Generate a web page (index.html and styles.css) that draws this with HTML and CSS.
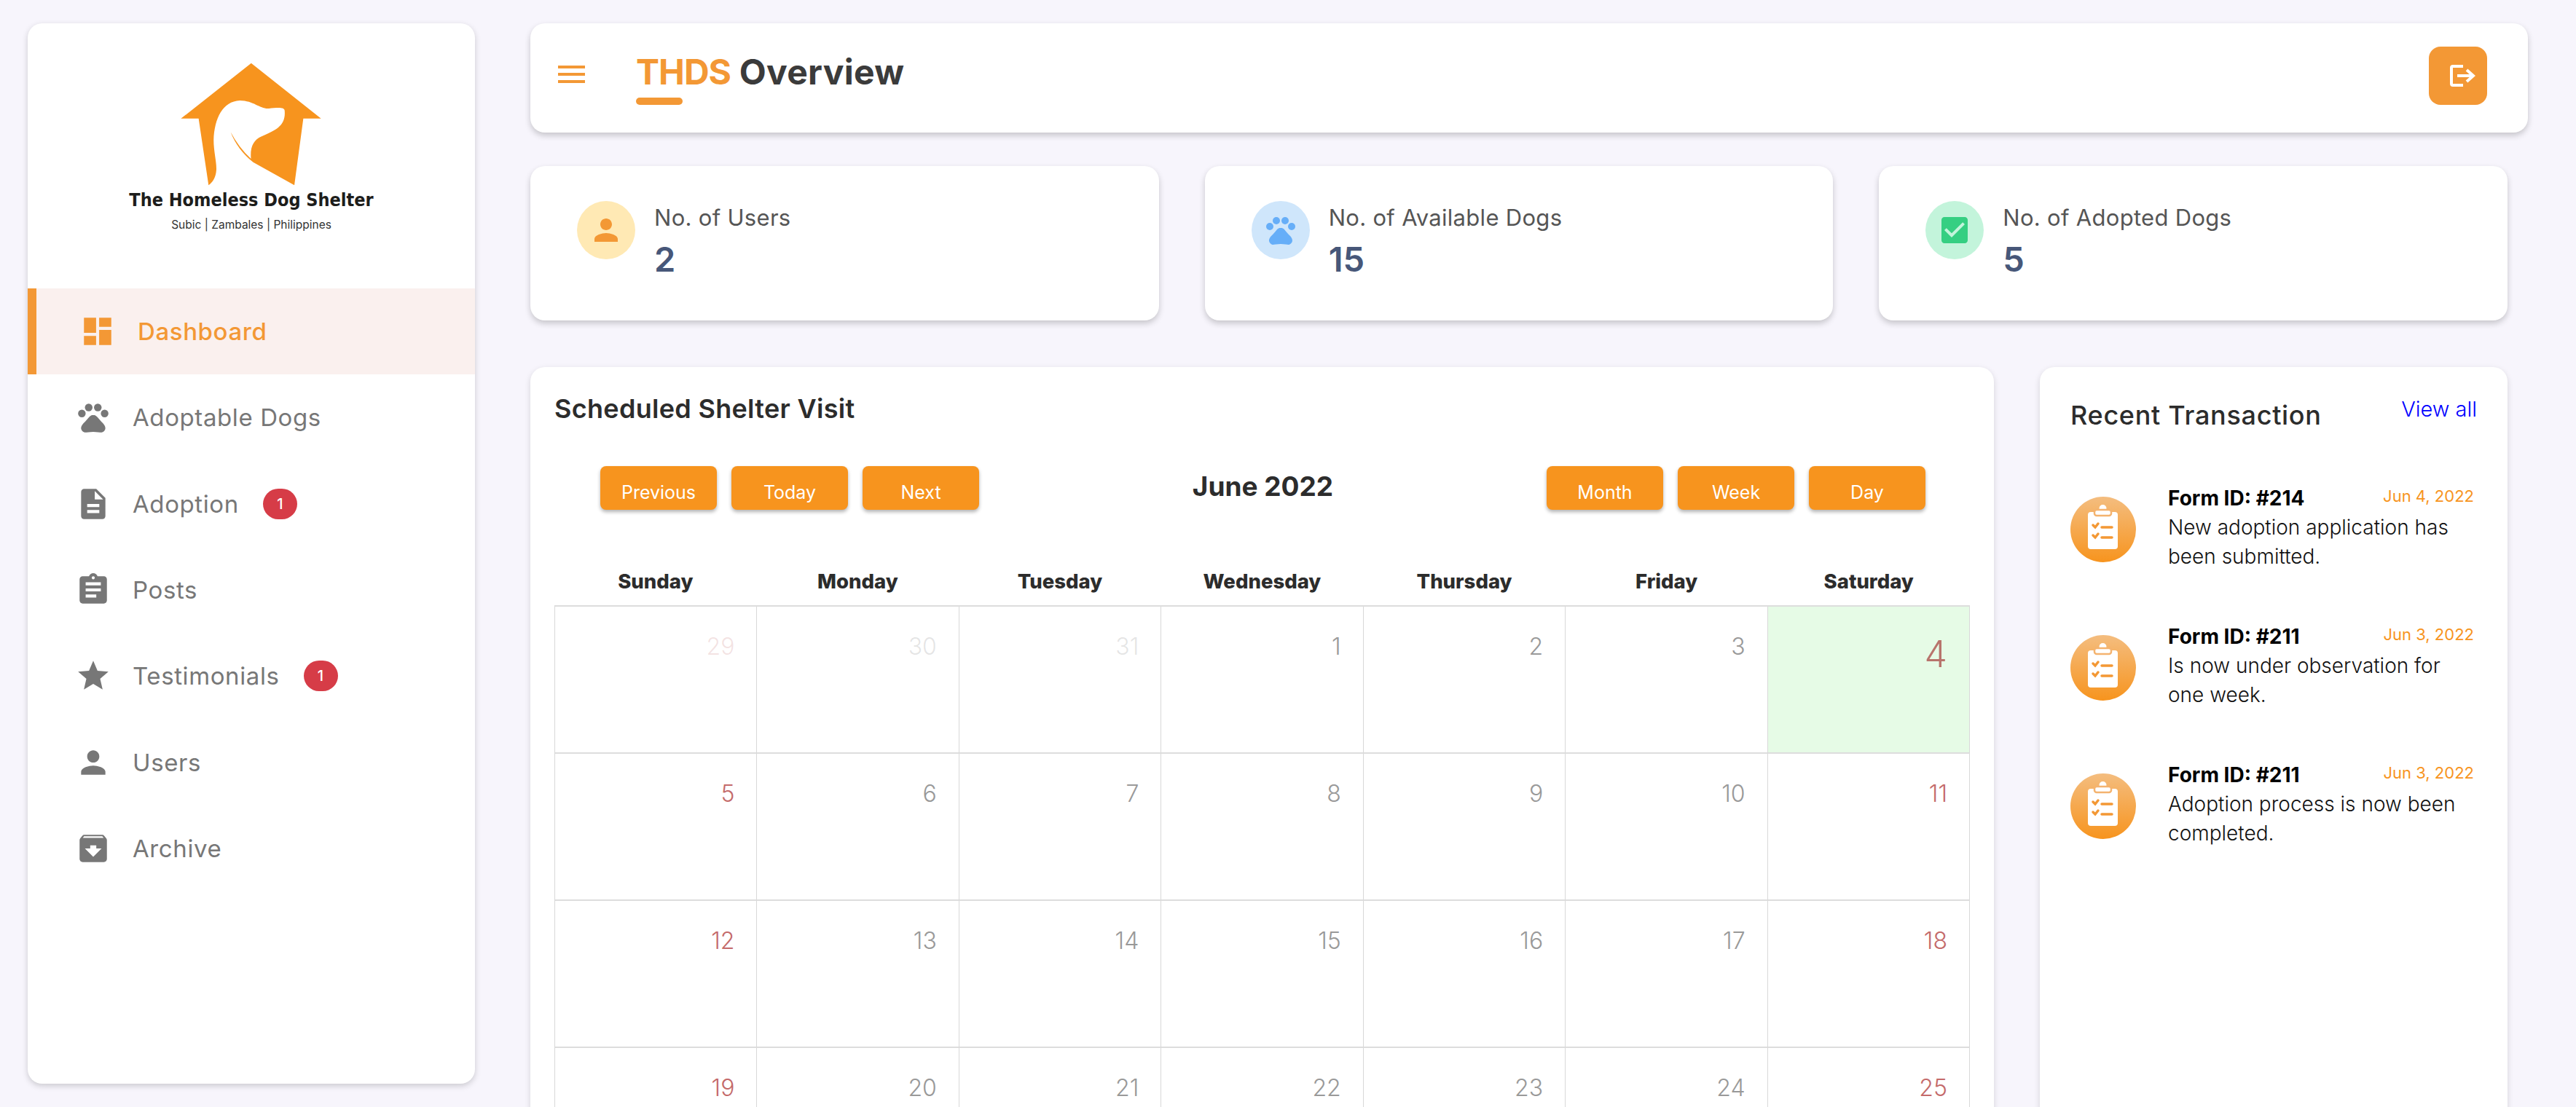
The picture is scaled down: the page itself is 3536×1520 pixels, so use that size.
FILE: index.html
```html
<!DOCTYPE html>
<html lang="en">
<head>
    <meta charset="UTF-8">
    <title>THDS Overview</title>
    <link rel="stylesheet" href="styles.css">
</head>
<body>
    <aside class="sidebar">
        <div class="logo">
            <svg class="logo-house" viewBox="320 75 595 520">
                <path d="M617 83L905 312H832L795 587L625 492Q560 440 532 367Q565 430 616 478C612 430 625 400 660 385C720 360 760 340 755 280C755 262 720 268 690 270C650 272 630 238 570 237C500 240 465 310 462 400C462 450 475 490 473 525C471 555 458 575 441 587L400 312H327Z"/>
            </svg>
            <div class="logo-name">The Homeless Dog Shelter</div>
            <div class="logo-place">Subic | Zambales | Philippines</div>
        </div>
        <nav>
            <a class="nav-item active">
                <svg class="nav-icon" viewBox="0 0 24 24"><path d="M3 13h8V3H3v10zm0 8h8v-6H3v6zm10 0h8V11h-8v10zm0-18v6h8V3h-8z"/></svg>
                <span>Dashboard</span>
            </a>
            <a class="nav-item">
                <svg class="nav-icon" viewBox="0 0 24 24"><circle cx="4.5" cy="9.5" r="2.5"/><circle cx="9" cy="5.5" r="2.5"/><circle cx="15" cy="5.5" r="2.5"/><circle cx="19.5" cy="9.5" r="2.5"/><path d="M17.34 14.86c-.87-1.02-1.6-1.89-2.48-2.91-.46-.54-1.05-1.08-1.75-1.32-.11-.04-.22-.07-.33-.09-.25-.04-.52-.04-.78-.04s-.53 0-.79.05c-.11.02-.22.05-.33.09-.7.24-1.28.78-1.75 1.32-.87 1.02-1.6 1.89-2.48 2.91-1.31 1.31-2.92 2.76-2.62 4.79.29 1.02 1.02 2.03 2.33 2.32.73.15 3.06-.44 5.54-.44h.18c2.48 0 4.81.58 5.54.44 1.31-.29 2.04-1.31 2.33-2.32.31-2.04-1.3-3.49-2.61-4.8z"/></svg>
                <span>Adoptable Dogs</span>
            </a>
            <a class="nav-item">
                <svg class="nav-icon" viewBox="0 0 24 24"><path d="M14 2H6c-1.1 0-1.99.9-1.99 2L4 20c0 1.1.89 2 1.99 2H18c1.1 0 2-.9 2-2V8l-6-6zm2 16H8v-2h8v2zm0-4H8v-2h8v2zm-3-5V3.5L18.5 9H13z"/></svg>
                <span>Adoption</span>
                <b class="badge">1</b>
            </a>
            <a class="nav-item">
                <svg class="nav-icon" viewBox="0 0 24 24"><path d="M19 3h-4.18C14.4 1.84 13.3 1 12 1c-1.3 0-2.4.84-2.82 2H5c-1.1 0-2 .9-2 2v14c0 1.1.9 2 2 2h14c1.1 0 2-.9 2-2V5c0-1.1-.9-2-2-2zm-7 0c.55 0 1 .45 1 1s-.45 1-1 1-1-.45-1-1 .45-1 1-1zm2 14H7v-2h7v2zm3-4H7v-2h10v2zm0-4H7V7h10v2z"/></svg>
                <span>Posts</span>
            </a>
            <a class="nav-item">
                <svg class="nav-icon" viewBox="0 0 24 24"><path d="M12 17.27L18.18 21l-1.64-7.03L22 9.24l-7.19-.61L12 2 9.19 8.63 2 9.24l5.46 4.73L5.82 21z"/></svg>
                <span>Testimonials</span>
                <b class="badge">1</b>
            </a>
            <a class="nav-item">
                <svg class="nav-icon" viewBox="0 0 24 24"><path d="M12 12c2.21 0 4-1.79 4-4s-1.79-4-4-4-4 1.79-4 4 1.79 4 4 4zm0 2c-2.67 0-8 1.34-8 4v2h16v-2c0-2.66-5.33-4-8-4z"/></svg>
                <span>Users</span>
            </a>
            <a class="nav-item">
                <svg class="nav-icon" viewBox="0 0 24 24"><path d="M20.54 5.23l-1.39-1.68C18.88 3.21 18.47 3 18 3H6c-.47 0-.88.21-1.16.55L3.46 5.23C3.17 5.57 3 6.02 3 6.5V19c0 1.1.9 2 2 2h14c1.1 0 2-.9 2-2V6.5c0-.48-.17-.93-.46-1.27zM12 17.5L6.5 12H10v-2h4v2h3.5L12 17.5zM5.12 5l.81-1h12l.94 1H5.12z"/></svg>
                <span>Archive</span>
            </a>
        </nav>
    </aside>

    <main>
        <header class="topbar">
            <svg class="menu-icon" viewBox="0 0 37 24"><path d="M0 0h37v4H0zM0 10h37v4H0zM0 20h37v4H0z"/></svg>
            <div class="page-title">
                <h1><span class="accent">THDS</span> Overview</h1>
                <div class="title-bar"></div>
            </div>
            <button class="logout">
                <svg viewBox="0 0 35 30"><path d="M18 2H4a2 2 0 0 0-2 2v22a2 2 0 0 0 2 2h14M10 15h22M23 7l9 8-9 8"/></svg>
            </button>
        </header>

        <section class="stats">
            <div class="stat-card">
                <div class="stat-icon users">
                    <svg viewBox="0 0 24 24"><path d="M12 12c2.21 0 4-1.79 4-4s-1.79-4-4-4-4 1.79-4 4 1.79 4 4 4zm0 2c-2.67 0-8 1.34-8 4v2h16v-2c0-2.66-5.33-4-8-4z"/></svg>
                </div>
                <div>
                    <div class="stat-label">No. of Users</div>
                    <div class="stat-value">2</div>
                </div>
            </div>
            <div class="stat-card">
                <div class="stat-icon dogs">
                    <svg viewBox="0 0 24 24"><circle cx="4.5" cy="9.5" r="2.5"/><circle cx="9" cy="5.5" r="2.5"/><circle cx="15" cy="5.5" r="2.5"/><circle cx="19.5" cy="9.5" r="2.5"/><path d="M17.34 14.86c-.87-1.02-1.6-1.89-2.48-2.91-.46-.54-1.05-1.08-1.75-1.32-.11-.04-.22-.07-.33-.09-.25-.04-.52-.04-.78-.04s-.53 0-.79.05c-.11.02-.22.05-.33.09-.7.24-1.28.78-1.75 1.32-.87 1.02-1.6 1.89-2.48 2.91-1.31 1.31-2.92 2.76-2.62 4.79.29 1.02 1.02 2.03 2.33 2.32.73.15 3.06-.44 5.54-.44h.18c2.48 0 4.81.58 5.54.44 1.31-.29 2.04-1.31 2.33-2.32.31-2.04-1.3-3.49-2.61-4.8z"/></svg>
                </div>
                <div>
                    <div class="stat-label">No. of Available Dogs</div>
                    <div class="stat-value">15</div>
                </div>
            </div>
            <div class="stat-card">
                <div class="stat-icon adopted">
                    <svg viewBox="0 0 24 24"><path d="M19 3H5c-1.1 0-2 .9-2 2v14c0 1.1.9 2 2 2h14c1.1 0 2-.9 2-2V5c0-1.1-.9-2-2-2zm-9 14l-5-5 1.41-1.41L10 14.17l7.59-7.59L19 8l-9 9z"/></svg>
                </div>
                <div>
                    <div class="stat-label">No. of Adopted Dogs</div>
                    <div class="stat-value">5</div>
                </div>
            </div>
        </section>

        <section class="content">
            <div class="calendar-card">
                <h2 class="card-title">Scheduled Shelter Visit</h2>
                <div class="cal-toolbar">
                    <div class="btn-group">
                        <button class="cal-btn">Previous</button>
                        <button class="cal-btn">Today</button>
                        <button class="cal-btn">Next</button>
                    </div>
                    <div class="cal-month">June 2022</div>
                    <div class="btn-group">
                        <button class="cal-btn">Month</button>
                        <button class="cal-btn">Week</button>
                        <button class="cal-btn">Day</button>
                    </div>
                </div>
                <div class="cal-head">
                    <div>Sunday</div><div>Monday</div><div>Tuesday</div><div>Wednesday</div><div>Thursday</div><div>Friday</div><div>Saturday</div>
                </div>
                <div class="cal-grid">
                    <div class="day other sun">29</div><div class="day other">30</div><div class="day other">31</div><div class="day">1</div><div class="day">2</div><div class="day">3</div><div class="day today">4</div>
                    <div class="day sun">5</div><div class="day">6</div><div class="day">7</div><div class="day">8</div><div class="day">9</div><div class="day">10</div><div class="day sun">11</div>
                    <div class="day sun">12</div><div class="day">13</div><div class="day">14</div><div class="day">15</div><div class="day">16</div><div class="day">17</div><div class="day sun">18</div>
                    <div class="day sun">19</div><div class="day">20</div><div class="day">21</div><div class="day">22</div><div class="day">23</div><div class="day">24</div><div class="day sun">25</div>
                </div>
            </div>

            <div class="recent-card">
                <div class="recent-head">
                    <h2 class="recent-title">Recent Transaction</h2>
                    <a class="view-all">View all</a>
                </div>
                <div class="tx">
                    <div class="tx-icon">
                        <svg viewBox="0 0 90 90"><use href="#clip"/></svg>
                    </div>
                    <div class="tx-body">
                        <div class="tx-top"><b>Form ID: #214</b><span class="tx-date">Jun 4, 2022</span></div>
                        <p>New adoption application has been submitted.</p>
                    </div>
                </div>
                <div class="tx">
                    <div class="tx-icon">
                        <svg viewBox="0 0 90 90"><use href="#clip"/></svg>
                    </div>
                    <div class="tx-body">
                        <div class="tx-top"><b>Form ID: #211</b><span class="tx-date">Jun 3, 2022</span></div>
                        <p>Is now under observation for one week.</p>
                    </div>
                </div>
                <div class="tx">
                    <div class="tx-icon">
                        <svg viewBox="0 0 90 90"><use href="#clip"/></svg>
                    </div>
                    <div class="tx-body">
                        <div class="tx-top"><b>Form ID: #211</b><span class="tx-date">Jun 3, 2022</span></div>
                        <p>Adoption process is now been completed.</p>
                    </div>
                </div>
            </div>
        </section>
    </main>

    <svg class="defs" width="0" height="0">
        <defs>
            <g id="clip">
                <rect x="24" y="21" width="41" height="51" rx="4" fill="#fff"/>
                <circle cx="44.5" cy="16" r="5" fill="#fff"/>
                <rect x="33" y="18" width="23" height="8" rx="3" fill="#fff" stroke="#f4b36f" stroke-width="2.5"/>
                <path d="M31 39l3 3 4-5M31 53l3 3 4-5" fill="none" stroke="#f39835" stroke-width="3.5" stroke-linecap="round"/>
                <path d="M43 42h14M43 56h14" stroke="#f39835" stroke-width="3.5" stroke-linecap="round"/>
            </g>
        </defs>
    </svg>
</body>
</html>
```

FILE: styles.css
```css
* {
    box-sizing: border-box;
    margin: 0;
    padding: 0;
    font-family: Inter, "Open Sans", sans-serif;
}

html, body {
    width: 100%;
    height: 100%;
    overflow: hidden;
}

body {
    display: flex;
    gap: 76px;
    padding: 32px 66px 32px 38px;
    background-color: #f7f5fc;
}

/* sidebar */
.sidebar {
    flex: 0 0 614px;
    background-color: white;
    border-radius: 20px;
    box-shadow: 0 3px 8px rgba(0, 0, 0, 0.18);
    overflow: hidden;
}

.logo {
    height: 364px;
    padding-top: 52px;
    display: flex;
    flex-direction: column;
    align-items: center;
}

.logo-house {
    width: 198px;
    height: 173px;
    fill: #f7941e;
}

.logo-name {
    font-family: "DejaVu Sans Condensed", "DejaVu Sans", sans-serif;
    font-weight: bold;
    font-size: 25px;
    line-height: 36px;
    color: #1d1d1b;
    white-space: nowrap;
}

.logo-place {
    font-size: 15.5px;
    line-height: 20px;
    margin-top: 6px;
    color: #333;
    white-space: nowrap;
}

.nav-item {
    display: flex;
    align-items: center;
    height: 118.4px;
    padding-left: 65px;
    color: #777;
    font-size: 33px;
    letter-spacing: 0.6px;
}

.nav-item.active {
    height: 118px;
    padding-left: 59px;
    border-left: 12px solid #f39835;
    background-color: #faf0ee;
    color: #f39835;
    font-weight: 500;
}

.nav-icon {
    width: 50px;
    height: 50px;
    margin-right: 29px;
    fill: currentColor;
}

.nav-item.active .nav-icon {
    margin-right: 30px;
}

.badge {
    width: 47px;
    height: 42px;
    margin-left: 33px;
    border-radius: 21px;
    background-color: #d63c47;
    color: white;
    font-size: 20px;
    font-weight: 500;
    line-height: 42px;
    text-align: center;
    letter-spacing: 0;
}

/* main column */
main {
    flex: 1;
    min-width: 0;
}

.topbar {
    height: 150px;
    display: flex;
    align-items: center;
    padding: 0 56px 6px 38px;
    background-color: white;
    border-radius: 20px;
    box-shadow: 0 4px 8px rgba(0, 0, 0, 0.2);
}

.menu-icon {
    width: 37px;
    height: 24px;
    fill: #f39835;
    margin: 0 70px 4px 0;
}

.page-title {
    flex: 1;
    padding-top: 5px;
}

h1 {
    font-size: 48px;
    font-weight: 700;
    line-height: 60px;
    letter-spacing: 0.3px;
    color: #3b3b3b;
}

.accent {
    color: #f39835;
    letter-spacing: -1px;
}

.title-bar {
    width: 64px;
    height: 10px;
    margin-top: 5px;
    border-radius: 5px;
    background-color: #f39835;
}

.logout {
    width: 80px;
    height: 80px;
    padding-left: 29px;
    border: none;
    border-radius: 16px;
    background-color: #f39835;
}

.logout svg {
    display: block;
    width: 35px;
    height: 30px;
    fill: none;
    stroke: white;
    stroke-width: 4;
}

.stats {
    display: grid;
    grid-template-columns: repeat(3, 1fr);
    gap: 63px;
    margin: 46px 28px 0 0;
}

.stat-card {
    height: 212px;
    display: flex;
    padding: 48px 0 0 64px;
    gap: 26px;
    background-color: white;
    border-radius: 20px;
    box-shadow: 0 4px 8px rgba(0, 0, 0, 0.2);
}

.stat-icon {
    width: 80px;
    height: 80px;
    border-radius: 50%;
    display: flex;
    align-items: center;
    justify-content: center;
}

.stat-icon svg {
    width: 48px;
    height: 48px;
}

.stat-icon.users { background-color: #ffe9b4; fill: #f39835; }
.stat-icon.dogs { background-color: #cfe6fb; fill: #66aef8; }
.stat-icon.adopted { background-color: #c3f4db; fill: #35cf82; }

.stat-label {
    font-size: 31px;
    line-height: 46px;
    letter-spacing: 0.3px;
    color: #555;
}

.stat-value {
    margin-top: 5px;
    font-size: 47px;
    font-weight: 600;
    line-height: 58px;
    color: #475779;
}

.content {
    display: flex;
    gap: 63px;
    margin: 64px 28px 0 0;
}

/* calendar */
.calendar-card {
    flex: 0 0 2009px;
    padding: 32px 33px;
    height: 1100px;
    background-color: white;
    border-radius: 20px;
    box-shadow: 0 3px 8px rgba(0, 0, 0, 0.14);
}

.card-title {
    font-size: 36px;
    font-weight: 600;
    line-height: 50px;
    letter-spacing: 0.3px;
    color: #2c2c2c;
}

.cal-toolbar {
    display: flex;
    align-items: flex-start;
    justify-content: space-between;
    margin-top: 54px;
    padding: 0 61px 0 63px;
}

.btn-group {
    display: flex;
    gap: 20px;
}

.cal-btn {
    width: 160px;
    height: 60px;
    padding-top: 11px;
    border: none;
    border-radius: 8px;
    background-color: #f7941e;
    color: white;
    font-size: 25px;
    box-shadow: 0 3px 5px rgba(0, 0, 0, 0.3);
}

.cal-month {
    font-size: 37px;
    font-weight: 700;
    line-height: 56px;
    color: #2c2c2c;
}

.cal-head {
    display: grid;
    grid-template-columns: repeat(7, 1fr);
    margin-top: 60px;
    height: 71px;
    line-height: 76px;
    text-align: center;
    font-size: 27.5px;
    font-weight: 800;
    color: #2c2c2c;
}

.cal-grid {
    display: grid;
    grid-template-columns: repeat(7, 1fr);
    grid-auto-rows: 202px;
    border-top: 2px solid #ddd;
    border-left: 1px solid #d8d8d8;
}

.day {
    padding: 32px 30px 0 0;
    border-right: 1px solid #d8d8d8;
    border-bottom: 2px solid #ddd;
    text-align: right;
    font-size: 32px;
    font-weight: 300;
    line-height: 46px;
    color: #999;
}

.day.sun {
    color: #c46a6a;
}

.day.other {
    color: rgba(120, 120, 120, 0.2);
}

.day.other.sun {
    color: rgba(196, 106, 106, 0.2);
}

.day.today {
    padding-top: 30px;
    background-color: #e6fbe6;
    color: #b8746c;
    font-size: 50px;
    line-height: 70px;
}

/* recent transactions */
.recent-card {
    flex: 1;
    padding: 32px 42px;
    height: 1100px;
    background-color: white;
    border-radius: 20px;
    box-shadow: 0 3px 8px rgba(0, 0, 0, 0.14);
}

.recent-head {
    display: flex;
    justify-content: space-between;
    height: 108px;
}

.recent-title {
    font-size: 36px;
    font-weight: 500;
    line-height: 68px;
    letter-spacing: 0.7px;
    color: #2c2c2c;
}

.view-all {
    margin-top: 4px;
    font-size: 29px;
    font-weight: 300;
    line-height: 44px;
    color: blue;
}

.tx {
    display: flex;
    gap: 44px;
    height: 190px;
    padding-right: 4px;
}

.tx-icon {
    flex: 0 0 90px;
    height: 90px;
    margin-top: 38px;
    border-radius: 50%;
    background: linear-gradient(#f4bd7f, #f7941e);
}

.tx-icon svg {
    display: block;
}

.tx-body {
    flex: 1;
    padding-top: 20px;
}

.tx-top {
    display: flex;
    justify-content: space-between;
    align-items: center;
    line-height: 34px;
}

.tx-top b {
    font-size: 28px;
    font-weight: 700;
    color: black;
}

.tx-date {
    margin-bottom: 6px;
    font-size: 22px;
    color: #f7941e;
}

.tx-body p {
    font-size: 28px;
    font-weight: 350;
    line-height: 40px;
    color: #111;
}

.defs {
    position: absolute;
}
```
